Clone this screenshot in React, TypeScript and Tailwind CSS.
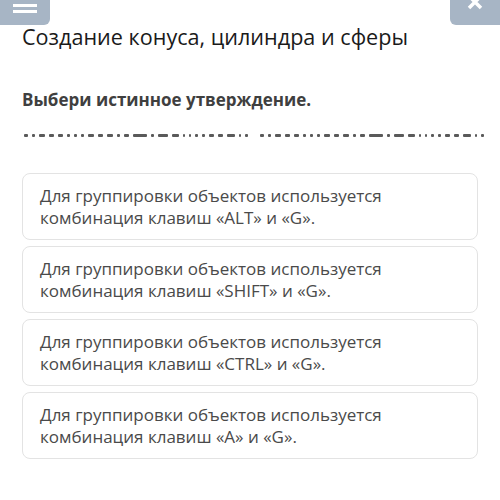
import React from "react";

const OPTIONS = [
  "комбинация клавиш «ALT» и «G».",
  "комбинация клавиш «SHIFT» и «G».",
  "комбинация клавиш «CTRL» и «G».",
  "комбинация клавиш «A» и «G».",
];

// widths of the little marks in the blurred hint line
const HALF = [4, 3, 6, 5, 5, 3, 3, 3, 6, 5, 6, 3, 5, 14, 3, 10, 7, 2, 2, 3, 3, 5, 5, 8, 2, 3];

function HintLine() {
  const half = (key: string) => (
    <div className="flex items-center gap-[4px]" key={key}>
      {HALF.map((w, i) => (
        <span
          key={i}
          className="h-[3px] bg-[#5a5a5a] rounded-[1px]"
          style={{ width: w }}
        />
      ))}
    </div>
  );
  return (
    <div className="flex items-center gap-[12px] mt-[22px] ml-[2px]">
      {half("a")}
      {half("b")}
    </div>
  );
}

export default function App() {
  return (
    <div
      className="w-[500px] h-[500px] bg-white relative overflow-hidden"
      style={{ fontFamily: '"Open Sans", "Noto Sans", sans-serif' }}
    >
      <div className="absolute left-0 top-0 w-[50px] h-[25px] bg-[#a7b5c5] rounded-br-[6px] flex flex-col items-center justify-center gap-[3px] pb-[8px]">
        <span className="block w-[24px] h-[3px] bg-white" />
        <span className="block w-[24px] h-[3px] bg-white" />
      </div>
      <div className="absolute right-0 top-0 w-[50px] h-[25px] bg-[#a7b5c5] rounded-bl-[6px] flex items-start justify-center">
        <svg width="16" height="14" viewBox="0 0 16 14" className="-mt-[4px]">
          <path d="M2 0 L14 12 M14 0 L2 12" stroke="white" strokeWidth="3.5" />
        </svg>
      </div>

      <div className="pl-[22px] pr-[22px] pt-[22px]">
        <h1 className="text-[21.6px] leading-[30px] text-[#1a1a1a]">
          Создание конуса, цилиндра и сферы
        </h1>
        <p className="mt-[36px] text-[17px] leading-[24px] font-bold text-[#3f3f3f]">
          Выбери истинное утверждение.
        </p>
        <HintLine />
        <div className="mt-[36px] flex flex-col gap-[6px]">
          {OPTIONS.map((o) => (
            <div
              key={o}
              className="h-[67px] border border-[#e3e3e3] rounded-[8px] px-[17px] flex flex-col justify-center text-[17px] leading-[22px] text-[#4a4a4a]"
            >
              <span>Для группировки объектов используется</span>
              <span>{o}</span>
            </div>
          ))}
        </div>
      </div>
    </div>
  );
}
